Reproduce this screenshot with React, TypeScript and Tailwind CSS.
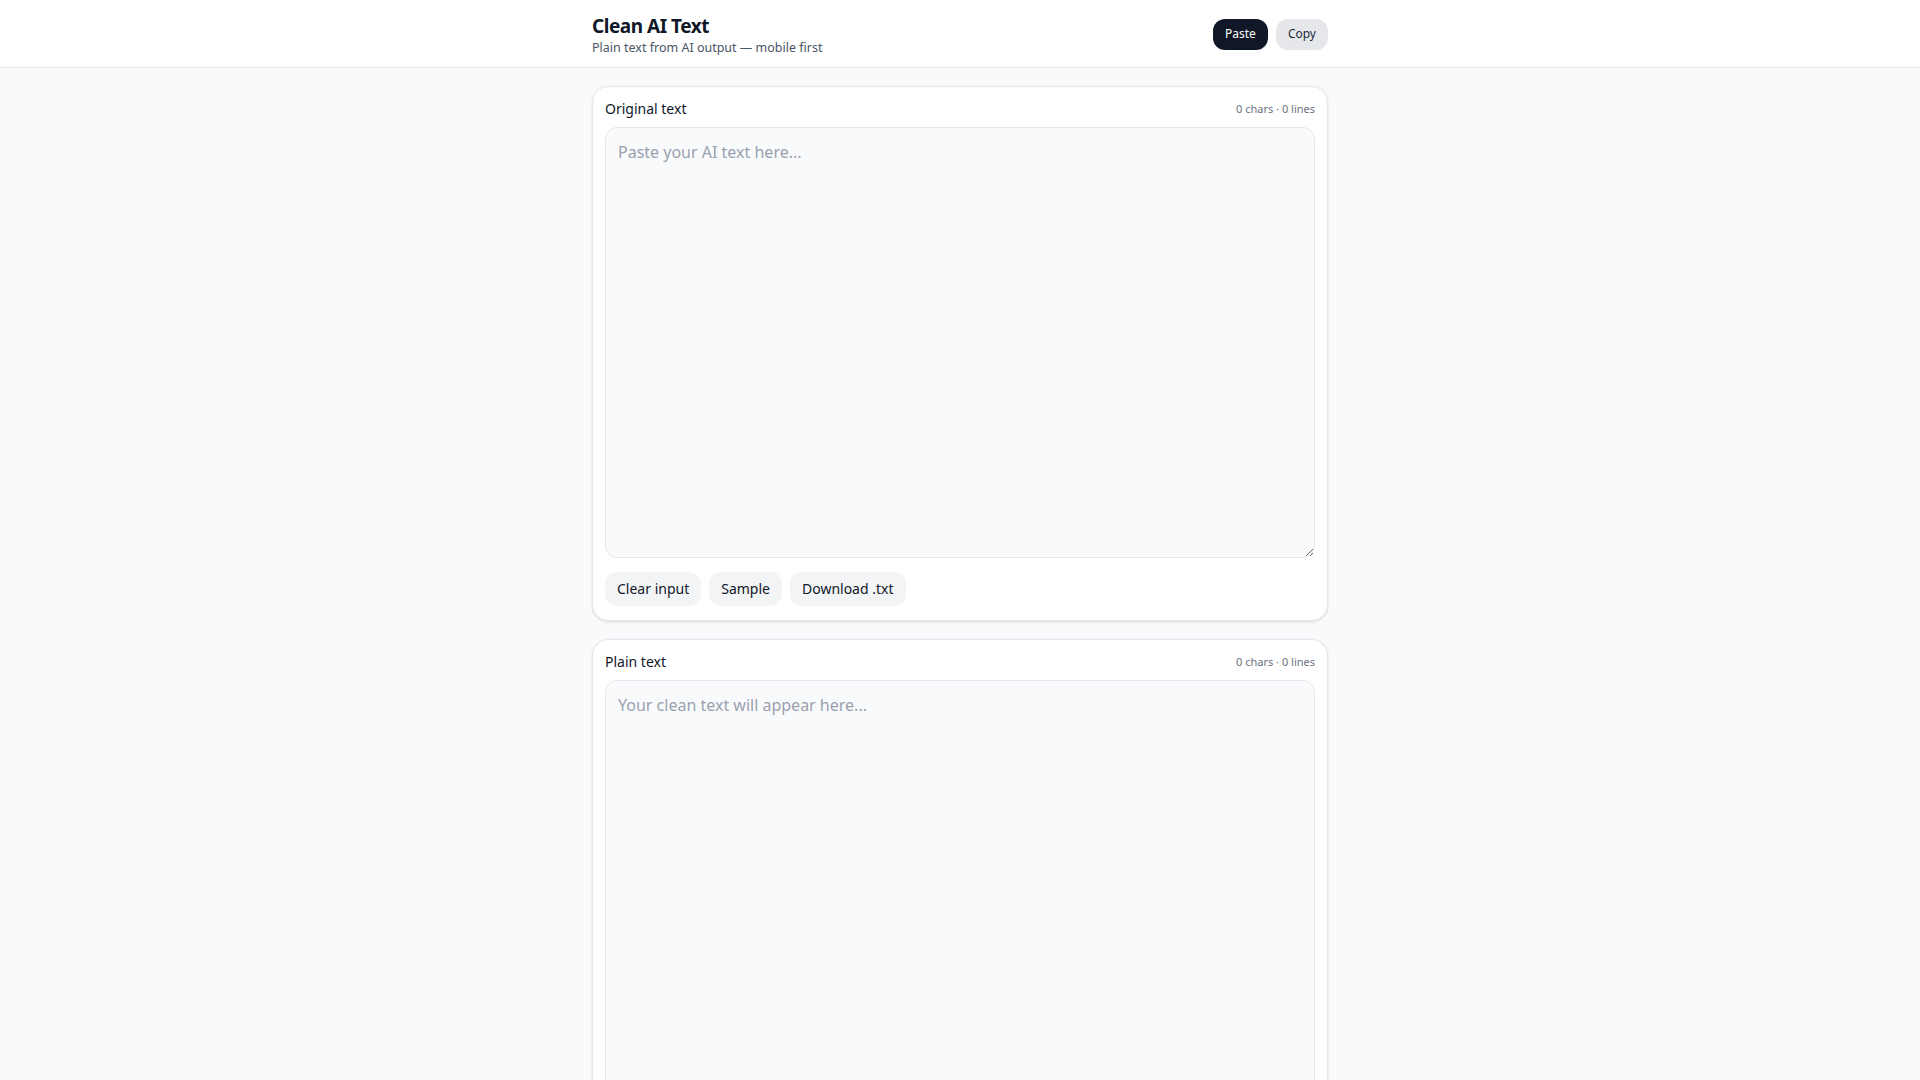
import { useState } from "react";

function Counter({ text }: { text: string }) {
  const lines = text.length ? text.split("\n").length : 0;
  return (
    <span className="text-[11px] text-gray-500">
      {text.length} chars · {lines} lines
    </span>
  );
}

export default function App() {
  const [input, setInput] = useState("");
  const output = input;

  return (
    <div
      className="min-h-screen bg-gray-50 text-gray-900"
      style={{ fontFamily: '"Noto Sans", "Open Sans", sans-serif' }}
    >
      {/* Header */}
      <header className="bg-white border-b border-gray-200">
        <div className="max-w-3xl mx-auto px-4 pt-3 pb-[11px] flex items-center justify-between">
          <div>
            <h1 className="text-[19px] leading-7 font-bold tracking-tight">Clean AI Text</h1>
            <p className="text-[12.5px] leading-4 text-gray-600">Plain text from AI output — mobile first</p>
          </div>
          <div className="flex items-center gap-2">
            <button className="h-[31px] px-3 rounded-xl bg-gray-900 text-white text-xs">Paste</button>
            <button className="h-[31px] px-3 rounded-xl bg-gray-200 text-gray-800 text-xs">Copy</button>
          </div>
        </div>
      </header>

      <main className="max-w-3xl mx-auto px-4 pt-[18px] pb-8 flex flex-col gap-[18px]">
        {/* Input card */}
        <section className="bg-white border border-gray-200 rounded-2xl shadow-sm px-3 pt-3 pb-[14px]">
          <div className="flex items-center justify-between mb-2">
            <span className="text-sm">Original text</span>
            <Counter text={input} />
          </div>
          <textarea
            value={input}
            onChange={(e) => setInput(e.target.value)}
            placeholder="Paste your AI text here..."
            className="block w-full h-[431px] p-3 text-base bg-gray-50 border border-gray-200 rounded-xl placeholder:text-gray-400 outline-none"
          />
          <div className="flex gap-2 mt-[14px]">
            <button className="h-[34px] px-3 rounded-xl bg-gray-100 text-sm">Clear input</button>
            <button className="h-[34px] px-3 rounded-xl bg-gray-100 text-sm">Sample</button>
            <button className="h-[34px] px-3 rounded-xl bg-gray-100 text-sm">Download .txt</button>
          </div>
        </section>

        {/* Output card */}
        <section className="bg-white border border-gray-200 rounded-2xl shadow-sm p-3">
          <div className="flex items-center justify-between mb-2">
            <span className="text-sm">Plain text</span>
            <Counter text={output} />
          </div>
          <textarea
            readOnly
            value={output}
            placeholder="Your clean text will appear here..."
            className="block w-full h-[431px] p-3 text-base bg-gray-50 border border-gray-200 rounded-xl placeholder:text-gray-400 outline-none"
          />
        </section>
      </main>
    </div>
  );
}
